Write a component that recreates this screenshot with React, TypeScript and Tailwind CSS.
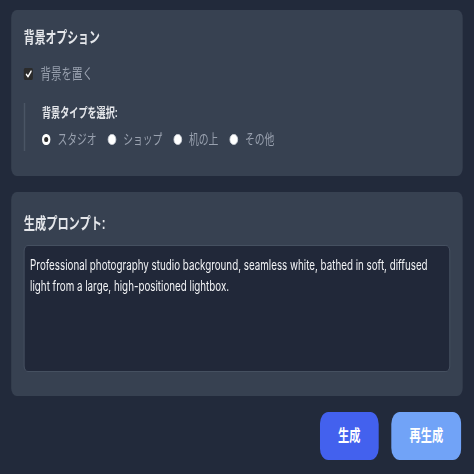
import { useState } from 'react';

const FONT = { fontFamily: '"Liberation Sans", "Noto Sans CJK JP", sans-serif' };
const PROMPT_FONT = { fontFamily: 'Inter, "Noto Sans CJK JP", sans-serif' };

const prompt =
    'Professional photography studio background, seamless white, bathed in soft, diffused light from a large, high-positioned lightbox.';

const types = ['スタジオ', 'ショップ', '机の上', 'その他'];

function Radio({ checked, label, onClick }: { checked: boolean; label: string; onClick: () => void }) {
    return (
        <button type="button" onClick={onClick} className="flex items-center gap-[10px]">
            {checked ? (
                <span className="w-[12px] h-[11px] rounded-full border-[3px] border-white bg-[#2b2b2b]"></span>
            ) : (
                <span className="w-[12px] h-[11px] rounded-full bg-white border border-[#cfd3da]"></span>
            )}
            <span className="text-[14px] leading-6 text-gray-400">{label}</span>
        </button>
    );
}

export default function App() {
    const [useBg, setUseBg] = useState(true);
    const [bgType, setBgType] = useState(0);

    return (
        <div className="w-[474px] h-[474px] overflow-hidden bg-[#222a3b]" style={FONT}>
            {/* the whole page is drawn narrow, as in the screenshot */}
            <div className="w-[677px] origin-top-left scale-x-[0.7] px-4 pt-[10px]">

                {/* Background options */}
                <section className="rounded-lg bg-[#374151] px-[18px] pt-5 pb-[25px]">
                    <h2 className="text-[15.5px] leading-6 font-bold text-gray-200 -mt-1">背景オプション</h2>

                    <label className="mt-3 flex items-center gap-[11px] cursor-pointer" onClick={() => setUseBg(!useBg)}>
                        <span className="w-[13px] h-[12px] rounded-[2px] bg-[#2b2b2b] flex items-center justify-center">
                            {useBg && (
                                <svg viewBox="0 0 12 12" className="w-[10px] h-[10px]">
                                    <path d="M2 6.5 L4.8 9.2 L10 2.8" fill="none" stroke="white" strokeWidth="2.2" strokeLinecap="round" strokeLinejoin="round" />
                                </svg>
                            )}
                        </span>
                        <span className="text-[15px] leading-6 text-gray-400">背景を置く</span>
                    </label>

                    <div className="mt-[17px] border-l-2 border-gray-600 pl-6">
                        <div className="text-[13px] leading-5 font-bold text-gray-200">背景タイプを選択:</div>
                        <div className="mt-1 flex items-center gap-4">
                            {types.map((t, i) => (
                                <Radio key={t} label={t} checked={bgType === i} onClick={() => setBgType(i)} />
                            ))}
                        </div>
                    </div>
                </section>

                {/* Prompt */}
                <section className="mt-4 rounded-lg bg-[#374151] px-[18px] pt-5 pb-6">
                    <h2 className="text-[16px] leading-6 font-semibold text-gray-200">生成プロンプト:</h2>
                    <textarea
                        readOnly
                        defaultValue={prompt}
                        className="mt-[9px] block w-full h-[127px] resize-none rounded-md border border-gray-600 bg-[#212839] pl-2 pr-4 pt-2 text-[14px] leading-[21px] text-gray-100 outline-none"
                        style={PROMPT_FONT}
                    />
                </section>

                {/* Actions */}
                <div className="mt-4 flex justify-end gap-[18px] pr-[2px]">
                    <button type="button" className="rounded-xl bg-[#4361ee] px-[26px] py-3 text-base leading-6 font-bold text-white">
                        生成
                    </button>
                    <button type="button" className="rounded-xl bg-[#71a3f7] px-[26px] py-3 text-base leading-6 font-bold text-white">
                        再生成
                    </button>
                </div>
            </div>
        </div>
    );
}
